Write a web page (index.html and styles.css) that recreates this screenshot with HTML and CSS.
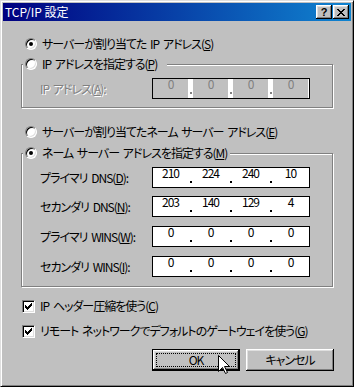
FILE: index.html
```html
<!DOCTYPE html>
<html lang="ja">
<head>
    <meta charset="UTF-8">
    <title>TCP/IP 設定</title>
    <link rel="stylesheet" href="styles.css">
</head>
<body>

<div class="window">
    <div class="titlebar">
        <span class="title">TCP/IP 設定</span>
        <div class="title-buttons">
            <span class="tb-btn help">?</span>
            <span class="tb-btn">
                <svg width="8" height="7" viewBox="0 0 8 7"><path d="M0 0h2v1h-2z M6 0h2v1h-2z M1 1h2v1h-2z M5 1h2v1h-2z M2 2h4v1h-4z M3 3h2v1h-2z M2 4h4v1h-4z M1 5h2v1h-2z M5 5h2v1h-2z M0 6h2v1h-2z M6 6h2v1h-2z" fill="#000"/></svg>
            </span>
        </div>
    </div>

    <div class="content">
        <div class="opt radio-row">
            <span class="radio on"></span>
            <span>サーバーが割り当てた IP アドレス(<u>S</u>)</span>
        </div>

        <div class="group group-ip">
            <div class="legend legend-ip">
                <span class="radio"></span>
                <span>IP アドレスを指定する(<u>P</u>)</span>
            </div>
            <div class="field-row first">
                <span class="label disabled">IP アドレス(<u>A</u>):</span>
                <div class="ip disabled">
                    <span class="seg">0</span><span class="dot"></span>
                    <span class="seg">0</span><span class="dot"></span>
                    <span class="seg">0</span><span class="dot"></span>
                    <span class="seg">0</span>
                </div>
            </div>
        </div>

        <div class="opt radio-row dns-auto">
            <span class="radio"></span>
            <span>サーバーが割り当てたネーム サーバー アドレス(<u>E</u>)</span>
        </div>

        <div class="group group-dns">
            <div class="legend legend-dns">
                <span class="radio on"></span>
                <span>ネーム サーバー アドレスを指定する(<u>M</u>)</span>
            </div>
            <div class="field-row first">
                <span class="label">プライマリ DNS(<u>D</u>):</span>
                <div class="ip">
                    <span class="seg">210</span><span class="dot"></span>
                    <span class="seg">224</span><span class="dot"></span>
                    <span class="seg">240</span><span class="dot"></span>
                    <span class="seg">10</span>
                </div>
            </div>
            <div class="field-row second">
                <span class="label">セカンダリ DNS(<u>N</u>):</span>
                <div class="ip">
                    <span class="seg">203</span><span class="dot"></span>
                    <span class="seg">140</span><span class="dot"></span>
                    <span class="seg">129</span><span class="dot"></span>
                    <span class="seg">4</span>
                </div>
            </div>
            <div class="field-row">
                <span class="label">プライマリ WINS(<u>W</u>):</span>
                <div class="ip">
                    <span class="seg">0</span><span class="dot"></span>
                    <span class="seg">0</span><span class="dot"></span>
                    <span class="seg">0</span><span class="dot"></span>
                    <span class="seg">0</span>
                </div>
            </div>
            <div class="field-row">
                <span class="label">セカンダリ WINS(<u>I</u>):</span>
                <div class="ip">
                    <span class="seg">0</span><span class="dot"></span>
                    <span class="seg">0</span><span class="dot"></span>
                    <span class="seg">0</span><span class="dot"></span>
                    <span class="seg">0</span>
                </div>
            </div>
        </div>

        <div class="opt check-row first">
            <span class="check">
                <svg width="7" height="7" viewBox="0 0 7 7"><path d="M0 2h1v3h-1z M1 3h1v3h-1z M2 4h1v3h-1z M3 3h1v3h-1z M4 2h1v3h-1z M5 1h1v3h-1z M6 0h1v3h-1z" fill="#000"/></svg>
            </span>
            <span>IP ヘッダー圧縮を使う(<u>C</u>)</span>
        </div>
        <div class="opt check-row">
            <span class="check">
                <svg width="7" height="7" viewBox="0 0 7 7"><path d="M0 2h1v3h-1z M1 3h1v3h-1z M2 4h1v3h-1z M3 3h1v3h-1z M4 2h1v3h-1z M5 1h1v3h-1z M6 0h1v3h-1z" fill="#000"/></svg>
            </span>
            <span>リモート ネットワークでデフォルトのゲートウェイを使う(<u>G</u>)</span>
        </div>

        <div class="buttons">
            <button class="btn default">OK</button>
            <button class="btn">キャンセル</button>
        </div>
    </div>

    <svg class="cursor" width="13" height="20" viewBox="0 0 13 20">
        <path d="M0.5 0.5V16.5L4.5 12.5L7.5 18.5L9.5 17.5L6.5 11.5H11.5Z" fill="#fff" stroke="#000" stroke-width="1"/>
    </svg>
</div>

</body>
</html>
```

FILE: styles.css
```css
* {
    box-sizing: border-box;
}
body {
    margin: 0;
    font-family: "Noto Sans CJK JP", sans-serif;
    font-size: 12px;
    line-height: 16px;
    color: #000;
    font-feature-settings: "palt";
}
u {
    text-decoration: underline;
    text-underline-offset: 1px;
}
.window {
    position: relative;
    width: 354px;
    height: 387px;
    background: #c0c0c0;
    border: 1px solid;
    border-color: #dfdfdf #000 #000 #dfdfdf;
    box-shadow: inset 1px 1px #fff, inset -1px -1px #808080;
    padding: 2px;
    display: flex;
    flex-direction: column;
}
.titlebar {
    height: 18px;
    flex: none;
    background: linear-gradient(90deg, #000080, #1084d0);
    color: #fff;
    display: flex;
    align-items: center;
    justify-content: space-between;
    padding: 0 2px;
}
.title {
    line-height: 18px;
}
.title-buttons {
    display: flex;
    gap: 1px;
}
.tb-btn {
    width: 16px;
    height: 14px;
    background: #c0c0c0;
    box-shadow: inset -1px -1px #000, inset 1px 1px #fff, inset -2px -2px #808080, inset 2px 2px #dfdfdf;
    display: flex;
    align-items: center;
    justify-content: center;
    color: #000;
}
.tb-btn.help {
    font-family: "Liberation Sans", sans-serif;
    font-weight: bold;
    font-size: 11px;
    line-height: 14px;
}
.content {
    flex: 1;
    display: flex;
    flex-direction: column;
    padding-top: 15px;
    letter-spacing: -1px;
    word-spacing: 2px;
}
.opt {
    display: flex;
    align-items: center;
    height: 16px;
    gap: 5px;
}
.radio-row {
    margin-left: 22px;
}
.radio-row.dns-auto {
    margin-top: 16px;
}
.radio {
    position: relative;
    flex: none;
    width: 12px;
    height: 12px;
    border-radius: 50%;
    background: #fff;
    border: 1px solid;
    border-color: #808080 #fff #fff #808080;
    box-shadow: inset 1px 1px #000, inset -1px -1px #dfdfdf;
}
.radio.on::after {
    content: "";
    position: absolute;
    left: 3px;
    top: 3px;
    width: 4px;
    height: 4px;
    border-radius: 50%;
    background: #000;
}
.group {
    margin-left: 18px;
    width: 312px;
    border: 1px solid #808080;
    box-shadow: inset 1px 1px #fff, 1px 1px #fff;
    display: flex;
    flex-direction: column;
}
.group-ip {
    margin-top: 12px;
    padding-bottom: 8px;
}
.group-dns {
    margin-top: 13px;
    padding-bottom: 9px;
}
.legend {
    align-self: flex-start;
    display: flex;
    align-items: center;
    gap: 5px;
    height: 16px;
    margin: -9px 0 0 1px;
    padding: 0 2px;
    background: #c0c0c0;
}
.legend-ip {
    padding-right: 10px;
}
.legend-dns {
    padding-right: 3px;
}
.field-row {
    display: flex;
    align-items: center;
    height: 21px;
    padding-left: 18px;
    margin-top: 9px;
}
.field-row.first {
    margin-top: 6px;
}
.field-row.second {
    margin-top: 8px;
}
.label {
    width: 112px;
    flex: none;
}
.label.disabled {
    color: #808080;
    text-shadow: 1px 1px #fff;
}
.ip {
    width: 158px;
    height: 21px;
    display: flex;
    background: #fff;
    border: 1px solid #000;
    padding-right: 1px;
}
.seg {
    width: 35px;
    text-align: center;
    line-height: 10px;
}
.dot {
    width: 5px;
    display: flex;
    align-items: flex-end;
    justify-content: center;
    padding-bottom: 4px;
}
.dot::before {
    content: "";
    width: 2px;
    height: 2px;
    background: #000;
}
.ip.disabled .seg {
    background: #c0c0c0;
    color: #808080;
}
.ip.disabled .dot::before {
    background: #808080;
}
.check-row {
    margin-left: 19px;
    margin-top: 9px;
}
.check-row.first {
    margin-top: 11px;
}
.check {
    flex: none;
    width: 13px;
    height: 13px;
    background: #fff;
    border: 1px solid;
    border-color: #808080 #fff #fff #808080;
    box-shadow: inset 1px 1px #000, inset -1px -1px #dfdfdf;
    display: flex;
    align-items: center;
    justify-content: center;
}
.check svg {
    display: block;
}
.buttons {
    display: flex;
    justify-content: flex-end;
    gap: 6px;
    margin-top: 10px;
    padding-right: 17px;
}
.btn {
    width: 88px;
    height: 22px;
    padding: 0;
    font: inherit;
    letter-spacing: inherit;
    color: #000;
    background: #c0c0c0;
    border: none;
    box-shadow: inset -1px -1px #000, inset 1px 1px #fff, inset -2px -2px #808080, inset 2px 2px #dfdfdf;
}
.btn.default {
    border: 1px solid #000;
    outline: 1px dotted #000;
    outline-offset: -5px;
}
.cursor {
    position: absolute;
    left: 217px;
    top: 354px;
}
```
